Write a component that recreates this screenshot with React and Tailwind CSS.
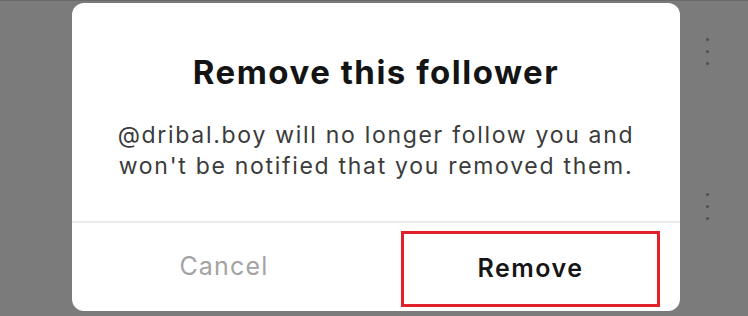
export default function App() {
  const dots = (
    <div className="flex flex-col gap-[9px]">
      <span className="block w-[3px] h-[3px] rounded-full bg-[#4f4f4f]" />
      <span className="block w-[3px] h-[3px] rounded-full bg-[#4f4f4f]" />
      <span className="block w-[3px] h-[3px] rounded-full bg-[#4f4f4f]" />
    </div>
  )

  return (
    <div
      className="w-[748px] h-[316px] bg-[#7b7b7b] overflow-hidden flex pl-[72px] pt-[2px] border-t border-[#6a6a6a]"
      style={{ fontFamily: 'Inter, "Noto Sans", sans-serif' }}
    >
      {/* Dialog */}
      <div className="w-[608px] h-[308px] bg-white rounded-[12px] flex flex-col">
        <div className="pt-[49px] h-[40px] box-content text-center text-[33px] leading-[40px] font-bold text-[#141414] tracking-[1.5px]">
          Remove this follower
        </div>
        <div className="mt-[28px] text-center text-[23px] leading-[31px] text-[#3b3b3b] tracking-[1.7px]">
          <p>@dribal.boy will no longer follow you and</p>
          <p>won't be notified that you removed them.</p>
        </div>
        <div className="mt-[39px] h-[2px] bg-[#ebebeb]" />
        <div className="grid grid-cols-2 flex-1">
          <div className="flex items-center justify-center text-[25px] tracking-[1.2px] text-[#a3a3a3]">
            Cancel
          </div>
          <div className="flex pl-[25px] pr-[20px] pt-[8px] pb-[4px]">
            <div className="flex-1 border-[3px] border-[#e2202b] flex items-center justify-center text-[25px] tracking-[1.5px] font-semibold text-[#161616]">
              Remove
            </div>
          </div>
        </div>
      </div>

      {/* Background list menus */}
      <div className="ml-[26px] flex flex-col">
        <div className="mt-[35px]">{dots}</div>
        <div className="mt-[128px]">{dots}</div>
      </div>
    </div>
  )
}
